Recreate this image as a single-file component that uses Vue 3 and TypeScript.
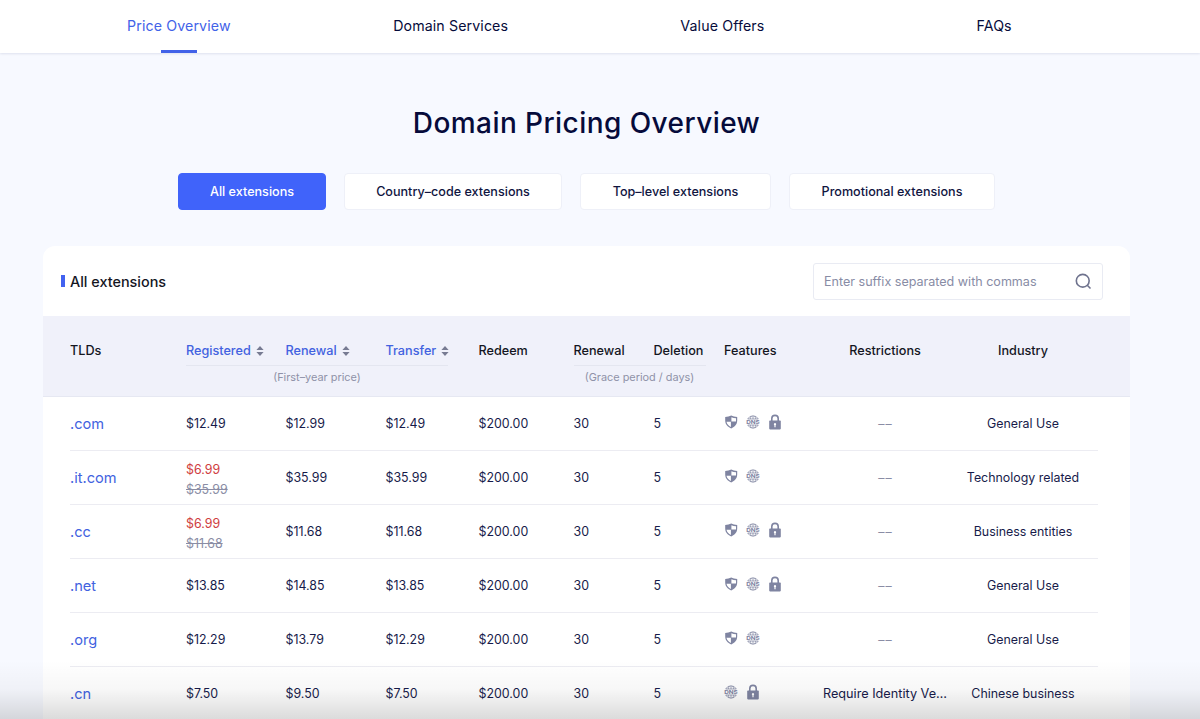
<script setup lang="ts">
type Feature = 'shield' | 'dns' | 'lock'

interface TldRow {
  tld: string
  registered: string
  original?: string
  renewal: string
  transfer: string
  features: Feature[]
  restriction?: string
  industry: string
}

const navItems: string[] = ['Price Overview', 'Domain Services', 'Value Offers', 'FAQs']
const filters: string[] = ['All extensions', 'Country–code extensions', 'Top–level extensions', 'Promotional extensions']

const rows: TldRow[] = [
  { tld: '.com', registered: '$12.49', renewal: '$12.99', transfer: '$12.49', features: ['shield', 'dns', 'lock'], industry: 'General Use' },
  { tld: '.it.com', registered: '$6.99', original: '$35.99', renewal: '$35.99', transfer: '$35.99', features: ['shield', 'dns'], industry: 'Technology related' },
  { tld: '.cc', registered: '$6.99', original: '$11.68', renewal: '$11.68', transfer: '$11.68', features: ['shield', 'dns', 'lock'], industry: 'Business entities' },
  { tld: '.net', registered: '$13.85', renewal: '$14.85', transfer: '$13.85', features: ['shield', 'dns', 'lock'], industry: 'General Use' },
  { tld: '.org', registered: '$12.29', renewal: '$13.79', transfer: '$12.29', features: ['shield', 'dns'], industry: 'General Use' },
  { tld: '.cn', registered: '$7.50', renewal: '$9.50', transfer: '$7.50', features: ['dns', 'lock'], restriction: 'Require Identity Ve…', industry: 'Chinese business' },
]
</script>

<template>
  <div class="page">
    <header class="topbar">
      <nav class="nav">
        <a v-for="(item, i) in navItems" :key="item" class="nav-item" :class="{ active: i === 0 }">{{ item }}</a>
      </nav>
    </header>

    <main class="content">
      <h1 class="title">Domain Pricing Overview</h1>

      <div class="filters">
        <button v-for="(f, i) in filters" :key="f" class="filter" :class="['filter-' + i, { active: i === 0 }]">{{ f }}</button>
      </div>

      <section class="card">
        <div class="card-head">
          <h2 class="card-title">All extensions</h2>
          <div class="search">
            <span class="search-text">Enter suffix separated with commas</span>
            <svg class="search-icon" viewBox="0 0 18 18">
              <circle cx="8.2" cy="8.2" r="6.8" />
              <path d="M13 13l3.4 3.4" />
            </svg>
          </div>
        </div>

        <div class="thead">
          <div class="grid">
            <span>TLDs</span>
            <span v-for="h in ['Registered', 'Renewal', 'Transfer']" :key="h" class="sortable">
              {{ h }}
              <svg class="sort" viewBox="0 0 8 10"><path d="M4 0L7.6 3.9H.4zM4 10L.4 6.1h7.2z" /></svg>
            </span>
            <span>Redeem</span>
            <span>Renewal</span>
            <span>Deletion</span>
            <span>Features</span>
            <span class="center">Restrictions</span>
            <span class="center">Industry</span>
          </div>
          <div class="grid notes">
            <span class="note note-price">(First–year price)</span>
            <span class="note note-grace">(Grace period / days)</span>
          </div>
        </div>

        <div class="tbody">
          <div v-for="row in rows" :key="row.tld" class="grid row">
            <span class="tld">{{ row.tld }}</span>
            <span v-if="row.original" class="promo">
              <span class="sale">{{ row.registered }}</span>
              <s class="was">{{ row.original }}</s>
            </span>
            <span v-else>{{ row.registered }}</span>
            <span>{{ row.renewal }}</span>
            <span>{{ row.transfer }}</span>
            <span>$200.00</span>
            <span>30</span>
            <span>5</span>
            <span class="features">
              <template v-for="f in row.features" :key="f">
                <svg v-if="f === 'shield'" class="icon" viewBox="0 0 14 14">
                  <path class="fill" d="M7.200.6C5.500 1.500 3.500 2 1.200 2.100V5.500c0 3.800 2.400 6.400 6 8 3.600-1.600 6-4.200 6-8V2.100C10.900 2 8.900 1.500 7.200.6z" />
                  <path class="cut" d="M7.400 2.300c1.400.6 2.900.9 4.600.95V6.600H7.400zM2.500 6.800H6.900v5.200C4.600 10.900 2.900 9.200 2.500 6.800z" />
                </svg>
                <svg v-else-if="f === 'dns'" class="icon" viewBox="0 0 14 14">
                  <g class="stroke">
                    <path d="M1.700 4a6 6 0 0 1 10.600 0zM1.700 10a6 6 0 0 0 10.600 0z" />
                    <path d="M7 .9V4M7 10v3.100M5.400 1.200Q4.500 2.300 4.200 4M8.600 1.200Q9.500 2.300 9.800 4M5.400 12.800Q4.500 11.700 4.200 10M8.600 12.800Q9.500 11.700 9.800 10" />
                  </g>
                  <text x=".2" y="8.900" textLength="13.600" lengthAdjust="spacingAndGlyphs">DNS</text>
                </svg>
                <svg v-else class="icon" viewBox="0 0 14 14">
                  <path class="shackle" d="M3.800 6.500V3.600a3.200 3.200 0 0 1 6.400 0v2.900" />
                  <rect class="fill" x="1.200" y="5.600" width="11.600" height="8.800" rx=".8" />
                  <path class="cut" d="M7 8a1.200 1.200 0 0 1 .6 2.200v2.100H6.400v-2.100A1.200 1.200 0 0 1 7 8z" />
                </svg>
              </template>
            </span>
            <span v-if="row.restriction" class="center restriction">{{ row.restriction }}</span>
            <span v-else class="center dash">––</span>
            <span class="center">{{ row.industry }}</span>
          </div>
        </div>
      </section>
    </main>
    <div class="fade"></div>
  </div>
</template>

<style>
body {
  margin: 0;
  overflow: hidden;
}
</style>

<style scoped>
.page {
  position: relative;
  height: 719px;
  overflow: hidden;
  background: #f7f9ff;
  color: #171b4a;
  font-family: Inter, 'Liberation Sans', sans-serif;
  font-size: 12.4px;
}
.topbar {
  height: 53px;
  background: #fff;
  box-shadow: 0 1px 2px rgba(40, 50, 110, 0.11);
}
.nav {
  display: flex;
  width: 1087px;
  height: 53px;
  margin-left: 43px;
}
.nav-item {
  position: relative;
  flex: 1;
  text-align: center;
  font-size: 14.2px;
  line-height: 52px;
  letter-spacing: 0.12px;
  color: #060b3b;
}
.nav-item.active {
  color: #4262e8;
}
.nav-item.active::after {
  content: '';
  position: absolute;
  left: 50%;
  bottom: 0;
  width: 36px;
  height: 3px;
  margin-left: -18px;
  background: #4262e8;
}
.content {
  width: 1087px;
  margin-left: 43px;
}
.title {
  margin: 0;
  padding-top: 49px;
  font-size: 28px;
  font-weight: 500;
  line-height: 42px;
  letter-spacing: 0.44px;
  text-align: center;
  color: #060b3b;
}
.filters {
  display: flex;
  justify-content: center;
  gap: 18px;
  margin-top: 29px;
}
.filter {
  box-sizing: border-box;
  height: 37px;
  padding: 0 0 1px;
  border: 1px solid #eef0f8;
  border-radius: 4px;
  background: #fff;
  color: #10153f;
  font: 500 12.6px Inter, sans-serif;
  white-space: nowrap;
}
.filter.active {
  border-color: #4063fa;
  background: #4063fa;
  color: #fff;
}
.filter-0 { width: 148px; }
.filter-1 { width: 218px; }
.filter-2 { width: 191px; }
.filter-3 { width: 206px; }
.card {
  margin-top: 36px;
  border-radius: 12px 12px 0 0;
  background: #fff;
}
.card-head {
  display: flex;
  align-items: center;
  justify-content: space-between;
  height: 70px;
  padding: 0 27px 0 18px;
}
.card-title {
  display: flex;
  align-items: center;
  margin: 0;
  font-size: 14.4px;
  font-weight: 500;
  color: #14161f;
}
.card-title::before {
  content: '';
  width: 4px;
  height: 12px;
  margin-right: 5px;
  background: #4262f0;
}
.search {
  box-sizing: border-box;
  display: flex;
  align-items: center;
  justify-content: space-between;
  width: 290px;
  height: 37px;
  padding: 0 10px;
  border: 1px solid #e9ebf3;
  border-radius: 3px;
  font-size: 12.55px;
  color: #888ca5;
}
.search-icon {
  width: 17px;
  height: 17px;
  fill: none;
  stroke: #6f738e;
  stroke-width: 1.7;
}
.thead {
  box-sizing: border-box;
  height: 81px;
  padding: 21px 32px 0 27px;
  border-bottom: 1px solid #e6e8f2;
  background: #f0f1fa;
  font-size: 12.65px;
  font-weight: 500;
  color: #14161f;
}
.grid {
  display: grid;
  grid-template-columns: 116px 99.500px 100px 93px 95px 80px 70.500px 98px 126px 150px;
  align-items: center;
  white-space: nowrap;
}
.thead .grid {
  line-height: 28px;
}
.sortable {
  display: flex;
  align-items: center;
  color: #4262e0;
}
.sort {
  width: 8px;
  height: 10px;
  margin: 0 0 1px 5px;
  fill: #777b92;
}
.thead .notes {
  line-height: 22px;
}
.note {
  border-top: 1px solid #e4e6f0;
  font-size: 10.9px;
  font-weight: 400;
  text-align: center;
  color: #8f92a8;
}
.note-price {
  grid-column: 2 / 5;
  width: 262px;
}
.note-grace {
  grid-column: 6 / 8;
  width: 132px;
}
.tbody {
  padding: 0 32px 0 27px;
}
.row {
  box-sizing: border-box;
  height: 54px;
  border-bottom: 1px solid #ececf2;
}
.center {
  text-align: center;
}
.restriction {
  font-size: 12.7px;
}
.tld {
  font-size: 14.6px;
  color: #4262e0;
}
.promo {
  display: flex;
  flex-direction: column;
  padding-top: 4px;
  line-height: 20px;
}
.sale {
  color: #cf3d41;
}
.was {
  color: #8a8da5;
}
.dash {
  padding-left: 1px;
  letter-spacing: 1px;
  color: #8a8da5;
}
.features {
  display: flex;
  gap: 8px;
  padding-bottom: 3px;
}
.icon {
  width: 14px;
  height: 14px;
  overflow: visible;
}
.fill {
  fill: #7f84a1;
}
.cut {
  fill: #fff;
}
.stroke {
  fill: none;
  stroke: #868ba6;
  stroke-width: 0.8;
}
.icon text {
  font: 700 5.2px Inter, sans-serif;
  fill: #7c81a0;
}
.shackle {
  fill: none;
  stroke: #7f84a1;
  stroke-width: 1.600;
}
.fade {
  position: absolute;
  right: 0;
  bottom: 0;
  left: 0;
  height: 59px;
  background: linear-gradient(rgba(0, 0, 0, 0), rgba(0, 0, 0, 0.03) 50%, rgba(0, 0, 0, 0.14));
}
</style>
